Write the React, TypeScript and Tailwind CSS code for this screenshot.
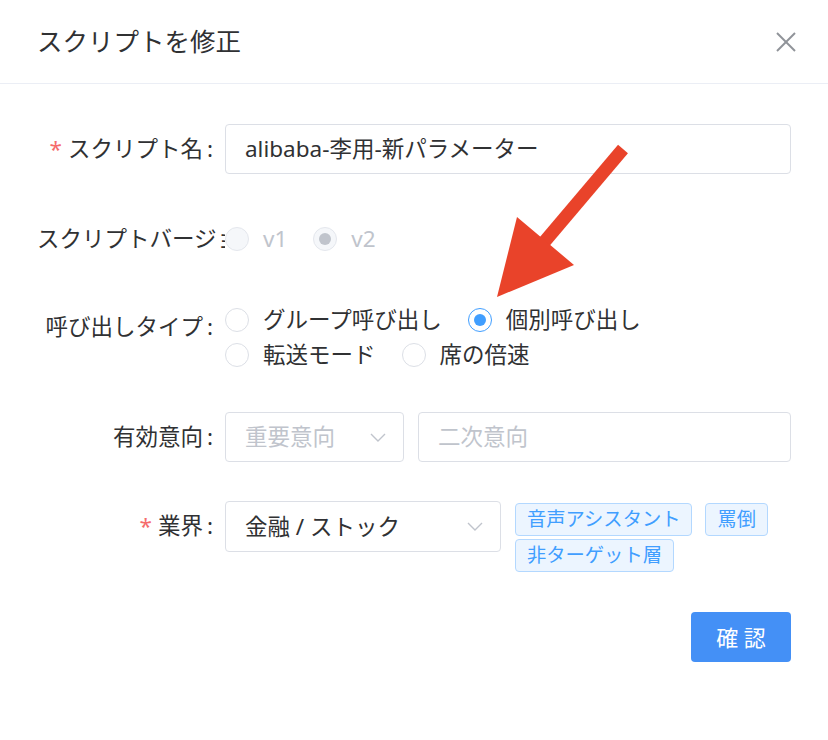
import type { ReactNode } from 'react';

const FONT = 'font-["Noto_Sans","Noto_Sans_CJK_JP",sans-serif]';

function Chevron() {
  return (
    <svg width="16" height="9" viewBox="0 0 16 9" className="shrink-0">
      <polyline points="1,1 8,8 15,1" fill="none" stroke="#c0c4cc" strokeWidth="1.4" />
    </svg>
  );
}

function Radio({ label, checked = false, disabled = false }: { label: string; checked?: boolean; disabled?: boolean }) {
  const circle = disabled
    ? 'bg-[#f5f7fa] border-[#e4e7ed]'
    : checked
      ? 'bg-white border-[#409eff]'
      : 'bg-white border-[#dcdfe6]';
  const dot = disabled ? 'bg-[#c0c4cc]' : 'bg-[#409eff]';
  return (
    <label className="inline-flex items-center mr-[26px] whitespace-nowrap">
      <span className={`w-[24px] h-[24px] rounded-full border flex items-center justify-center ${circle}`}>
        {checked && <span className={`w-[12px] h-[12px] rounded-full ${dot}`} />}
      </span>
      <span className={`ml-[14px] ${disabled ? 'text-[#c0c4cc]' : 'text-[#303133]'}`}>{label}</span>
    </label>
  );
}

// label column is 188px wide; long labels get cut off at the control edge
function Row({ label, required = false, children, className = '' }: { label: string; required?: boolean; children: ReactNode; className?: string }) {
  return (
    <div className={`flex items-start ${className}`}>
      <div className="w-[188px] shrink-0 pr-[12px] text-right leading-[50px] whitespace-nowrap overflow-hidden text-[#303133]">
        {required && <span className="text-[#f56c6c] mr-[6px]">*</span>}
        {label}
        <span className="ml-[4px]">:</span>
      </div>
      <div className="relative z-10 bg-white flex-1 min-w-0">{children}</div>
    </div>
  );
}

function Tag({ children }: { children: ReactNode }) {
  return (
    <span className="inline-flex items-center h-[33px] px-[11px] rounded-[4px] border border-[#b3d8ff] bg-[#ecf5ff] text-[#409eff] text-[19.3px] whitespace-nowrap">
      {children}
    </span>
  );
}

export default function App() {
  return (
    <div className={`relative w-[828px] h-[740px] bg-white ${FONT} text-[22.5px]`}>
      <div className="h-[84px] px-[37px] flex items-center justify-between border-b border-[#ebeef5]">
        <h1 className="text-[25.5px] text-[#303133]">スクリプトを修正</h1>
        <svg width="22" height="22" viewBox="0 0 22 22" className="mr-[-6px]">
          <line x1="2" y1="2" x2="20" y2="20" stroke="#909399" strokeWidth="2" />
          <line x1="20" y1="2" x2="2" y2="20" stroke="#909399" strokeWidth="2" />
        </svg>
      </div>

      <div className="pt-[40px] px-[37px]">
        <Row label="スクリプト名" required className="mb-[40px]">
          <div className="h-[50px] border border-[#dcdfe6] rounded-[4px] px-[19px] flex items-center text-[#303133]">
            alibaba-李用-新パラメーター
          </div>
        </Row>

        <Row label="スクリプトバージョン" className="mb-[38px]">
          <div className="h-[50px] flex items-center">
            <Radio label="v1" disabled />
            <Radio label="v2" disabled checked />
          </div>
        </Row>

        <Row label="呼び出しタイプ" className="mb-[40px]">
          <div className="flex flex-wrap leading-[35px]">
            <Radio label="グループ呼び出し" />
            <Radio label="個別呼び出し" checked />
            <Radio label="転送モード" />
            <Radio label="席の倍速" />
          </div>
        </Row>

        <Row label="有効意向" className="mb-[39px]">
          <div className="flex gap-[14px]">
            <div className="w-[179px] h-[50px] border border-[#dcdfe6] rounded-[4px] pl-[19px] pr-[17px] flex items-center justify-between text-[#c0c4cc]">
              <span>重要意向</span>
              <Chevron />
            </div>
            <div className="flex-1 h-[50px] border border-[#dcdfe6] rounded-[4px] px-[19px] flex items-center text-[#c0c4cc]">
              二次意向
            </div>
          </div>
        </Row>

        <Row label="業界" required className="mb-[40px]">
          <div className="flex items-start gap-[14px]">
            <div className="w-[276px] shrink-0 h-[51px] border border-[#dcdfe6] rounded-[4px] pl-[19px] pr-[17px] flex items-center justify-between text-[#303133]">
              <span>金融 / ストック</span>
              <Chevron />
            </div>
            <div className="flex flex-wrap gap-x-[13px] gap-y-[3px] pt-[2px]">
              <Tag>音声アシスタント</Tag>
              <Tag>罵倒</Tag>
              <Tag>非ターゲット層</Tag>
            </div>
          </div>
        </Row>

        <div className="flex justify-end">
          <button className="w-[100px] h-[50px] rounded-[4px] bg-[#4490f6] text-white text-[22px]">確 認</button>
        </div>
      </div>

      <svg className="absolute inset-0 pointer-events-none z-20" width="828" height="740" viewBox="0 0 828 740">
        <line x1="623" y1="149" x2="540" y2="247" stroke="#e9432a" strokeWidth="13" />
        <polygon points="517,217 574,265 497,297" fill="#e9432a" />
      </svg>
    </div>
  );
}
